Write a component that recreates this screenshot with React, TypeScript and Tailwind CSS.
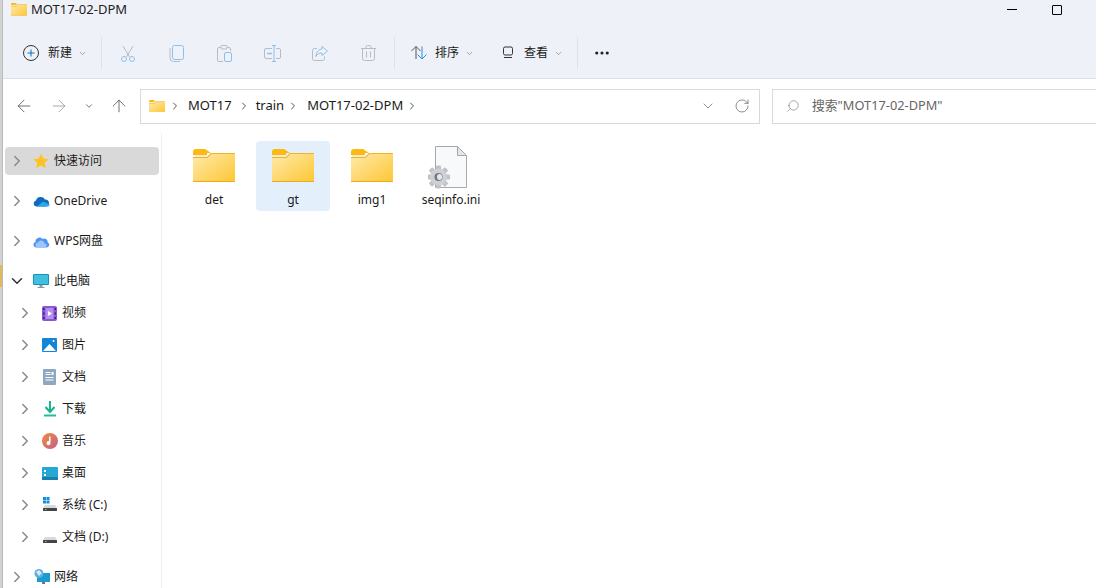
import React from "react";
import { ChevronRight, ChevronDown, ArrowLeft, ArrowRight, ArrowUp, RotateCw, Search, MoreHorizontal } from "lucide-react";

const font = { fontFamily: '"Noto Sans", "Noto Sans CJK SC", sans-serif' };

function Folder({ size = 18 }: { size?: number }) {
  const id = "f" + size;
  return (
    <svg width={size} height={(size * 33) / 42} viewBox="0 0 42 33" className="shrink-0">
      <defs>
        <linearGradient id={id} x1="0" y1="0" x2="1" y2="1">
          <stop offset="0" stopColor="#ffeaae" />
          <stop offset="1" stopColor="#fdc733" />
        </linearGradient>
      </defs>
      <path d="M0 3a3 3 0 0 1 3-3h9l6 4h-4v2H0z" fill="#fdb913" />
      <path d="M0 8h14l4-4h22a2 2 0 0 1 2 2v25a2 2 0 0 1-2 2H2a2 2 0 0 1-2-2z" fill={`url(#${id})`} />
      <path d="M14 8l4-4h24v1H18.500l-4 4H0V8z" fill="#f2b226" />
      <path d="M1 6h14l-2 2H1z" fill="#f6ecd0" />
      <rect y="32" width="42" height="1" fill="#efaa1b" />
    </svg>
  );
}

function ToolIcon({ children }: { children: React.ReactNode }) {
  return <div className="w-12 flex justify-center items-center">{children}</div>;
}

function NavRow({ label, indent, open, icon, active }: { label: string; indent?: boolean; open?: boolean; icon: React.ReactNode; active?: boolean }) {
  return (
    <div className={`h-[28px] flex items-center rounded-sm ${indent ? "pl-[11px]" : "pl-[3px]"} ${active ? "bg-[#d9d9d9]" : ""}`}>
      {open ? (
        <ChevronDown size={18} strokeWidth={2} className="text-[#333] shrink-0" />
      ) : (
        <ChevronRight size={18} strokeWidth={2} className="text-[#8a8a8a] shrink-0" />
      )}
      <div className="w-[17px] h-[17px] ml-[7px] flex items-center justify-center shrink-0">{icon}</div>
      <span className="ml-[4px] text-[12px] text-[#1a1a1a] whitespace-nowrap">{label}</span>
    </div>
  );
}

function Drive({ windows }: { windows?: boolean }) {
  return (
    <svg width="16" height="16" viewBox="0 0 16 16">
      {windows && (
        <g fill="#0f8fe0">
          <rect x="1" y="0" width="3" height="3" />
          <rect x="4.500" y="0" width="3" height="3" />
          <rect x="1" y="3.500" width="3" height="3" />
          <rect x="4.500" y="3.500" width="3" height="3" />
        </g>
      )}
      <path d="M3 8h10l2 3H1z" fill="#d9d9d9" />
      <rect x="1" y="11" width="14" height="3" rx="0.500" fill="#444" />
      <rect x="3" y="12" width="1.500" height="1" fill="#6fdc6f" />
    </svg>
  );
}

function FileItem({ label, selected, children }: { label: string; selected?: boolean; children: React.ReactNode }) {
  return (
    <div className={`w-[74px] h-[70px] mr-[5px] rounded-sm flex flex-col items-center pt-[8px] ${selected ? "bg-[#e3f0fb]" : ""}`}>
      <div className="h-[33px] flex items-center justify-center">{children}</div>
      <span className="mt-[10px] text-[12px] leading-[16px] text-[#1a1a1a]">{label}</span>
    </div>
  );
}

function Dropdown() {
  return <ChevronDown size={9} className="text-[#8a8a8a] ml-[6px]" />;
}

const gearTeeth = [0, 45, 90, 135, 180, 225, 270, 315];

export default function App() {
  return (
    <div className="w-[1096px] h-[588px] overflow-hidden flex bg-white" style={font}>
      <div className="w-[3px] bg-[#d2d2d2] border-r border-[#bcbcbc] shrink-0 flex flex-col">
        <div className="h-[265px]" />
        <div className="h-[22px] bg-[#e0b95c]" />
      </div>
      <div className="flex-1 min-w-0 flex flex-col">
        <div className="h-[79px] bg-[#eef2f8] border-b border-[#dcdfe3] flex flex-col">
          <div className="h-[19px] flex items-center pl-[8px]">
            <Folder size={16} />
            <span className="ml-[4px] text-[13px] text-[#222]">MOT17-02-DPM</span>
            <div className="ml-auto flex items-center mr-[34px]">
              <div className="w-[10px] h-px bg-black mr-[35px]" />
              <div className="w-[10px] h-[10px] border border-black rounded-[1px]" />
            </div>
          </div>
          <div className="h-[32px] mt-[18px] flex items-center pl-[20px]">
            <svg width="16" height="16" viewBox="0 0 16 16" fill="none" className="shrink-0">
              <circle cx="8" cy="8" r="7.500" stroke="#333" />
              <path d="M8 4.500v7M4.500 8h7" stroke="#0f6cbd" />
            </svg>
            <span className="ml-[9px] text-[12px] text-[#1a1a1a]">新建</span>
            <Dropdown />
            <div className="w-px h-[32px] bg-[#dfe3e8] ml-[14px] mr-[2px]" />
            <ToolIcon>
              <svg width="16" height="17" viewBox="0 0 16 17" fill="none">
                <path d="M3 1l6.500 11M13 1L6.500 12" stroke="#b4bcc4" />
                <circle cx="4" cy="14" r="2.500" stroke="#8cc0ec" />
                <circle cx="12" cy="14" r="2.500" stroke="#8cc0ec" />
              </svg>
            </ToolIcon>
            <ToolIcon>
              <svg width="15" height="17" viewBox="0 0 15 17" fill="none">
                <rect x="3.500" y="0.500" width="11" height="14" rx="2" stroke="#8cc0ec" />
                <path d="M1 3v10a3.500 3.500 0 0 0 3.500 3.500H11" stroke="#b4bcc4" />
              </svg>
            </ToolIcon>
            <ToolIcon>
              <svg width="15" height="17" viewBox="0 0 15 17" fill="none">
                <path d="M4 2.500H2a1.500 1.500 0 0 0-1.500 1.500v11A1.500 1.500 0 0 0 2 16.500h4M10 2.500h2a1.500 1.500 0 0 1 1.500 1.500v2" stroke="#b4bcc4" />
                <rect x="4" y="0.500" width="6" height="3.500" rx="1" stroke="#b4bcc4" />
                <rect x="7.500" y="7.500" width="7" height="9" rx="1.500" stroke="#8cc0ec" />
              </svg>
            </ToolIcon>
            <ToolIcon>
              <svg width="17" height="17" viewBox="0 0 17 17" fill="none">
                <path d="M8 3.500H2a1.500 1.500 0 0 0-1.500 1.500v7A1.500 1.500 0 0 0 2 13.500h6M12 3.500h3A1.500 1.500 0 0 1 16.500 5v7a1.500 1.500 0 0 1-1.500 1.500h-3" stroke="#b4bcc4" />
                <path d="M10 1v15M8 .5h4M8 16.500h4" stroke="#8cc0ec" />
                <path d="M3 8.500h5" stroke="#8cc0ec" strokeWidth="1.500" />
              </svg>
            </ToolIcon>
            <ToolIcon>
              <svg width="16" height="15" viewBox="0 0 16 15" fill="none">
                <path d="M5 2.500H2.500a2 2 0 0 0-2 2v8a2 2 0 0 0 2 2h8a2 2 0 0 0 2-2v-2" stroke="#b4bcc4" />
                <path d="M10 .5l5.500 4.500-5.500 4.500V7C7 7 5 8 4 10.500 4 6 6.500 3.300 10 3z" stroke="#8cc0ec" />
              </svg>
            </ToolIcon>
            <ToolIcon>
              <svg width="15" height="16" viewBox="0 0 15 16" fill="none" stroke="#b9bdc1">
                <path d="M0 3.500h15M5 3.500V2a1.500 1.500 0 0 1 1.500-1.500h2A1.500 1.500 0 0 1 10 2v1.500" />
                <path d="M1.500 3.500v10a2 2 0 0 0 2 2h8a2 2 0 0 0 2-2v-10" />
                <path d="M5.500 6.500v6M9.500 6.500v6" />
              </svg>
            </ToolIcon>
            <div className="w-px h-[32px] bg-[#dfe3e8] ml-[2px]" />
            <svg width="17" height="16" viewBox="0 0 17 16" fill="none" className="ml-[16px] shrink-0">
              <path d="M5 14V1.500M.5 6l4.500-4.500L9.500 6" stroke="#555" />
              <path d="M11 1.500V14M6.500 9.500L11 14l4.500-4.500" stroke="#2291e8" />
            </svg>
            <span className="ml-[7px] text-[12px] text-[#1a1a1a]">排序</span>
            <Dropdown />
            <svg width="12" height="14" viewBox="0 0 12 14" fill="none" stroke="#333" className="ml-[28px] shrink-0">
              <rect x="1.500" y="1" width="9" height="8" rx="1.500" />
              <path d="M2 11.500h8" />
            </svg>
            <span className="ml-[10px] text-[12px] text-[#1a1a1a]">查看</span>
            <Dropdown />
            <div className="w-px h-[32px] bg-[#dfe3e8] ml-[14px]" />
            <MoreHorizontal size={18} strokeWidth={2.200} className="ml-[15px] text-[#222]" />
          </div>
        </div>
        <div className="h-[54px] flex items-center shrink-0">
          <ArrowLeft size={20} strokeWidth={1} className="ml-[11px] text-[#555]" />
          <ArrowRight size={20} strokeWidth={1} className="ml-[15px] text-[#999]" />
          <ChevronDown size={10} strokeWidth={2} className="ml-[15px] text-[#555]" />
          <ArrowUp size={20} strokeWidth={1} className="ml-[15px] text-[#555]" />
          <div className="ml-[11px] w-[620px] h-[35px] border border-[#d9d9d9] flex items-center pl-[8px] text-[13px] text-[#1a1a1a]">
            <Folder size={16} />
            <ChevronRight size={12} strokeWidth={2} className="ml-[4px] text-[#555]" />
            <span className="ml-[7px]">MOT17</span>
            <ChevronRight size={12} strokeWidth={2} className="ml-[6px] text-[#555]" />
            <span className="ml-[6px]">train</span>
            <ChevronRight size={12} strokeWidth={2} className="ml-[3px] text-[#555]" />
            <span className="ml-[8px]">MOT17-02-DPM</span>
            <ChevronRight size={12} strokeWidth={2} className="ml-[3px] text-[#555]" />
            <ChevronDown size={16} strokeWidth={1} className="ml-auto text-[#555]" />
            <RotateCw size={16} strokeWidth={1} className="ml-[18px] mr-[9px] text-[#555]" />
          </div>
          <div className="ml-[12px] flex-1 h-[35px] border border-[#d9d9d9] border-r-0 flex items-center pl-[13px]">
            <Search size={14} strokeWidth={1.100} className="text-[#777] -scale-x-100" />
            <span className="ml-[12px] text-[12.800px] text-[#666] whitespace-nowrap">搜索"MOT17-02-DPM"</span>
          </div>
        </div>
        <div className="flex-1 flex min-h-0">
          <div className="w-[159px] border-r border-[#f0f0f0] shrink-0 pl-[2px] pr-[2px] pt-[14px] flex flex-col">
            <div className="flex flex-col gap-[12px]">
              <NavRow active label="快速访问" icon={<svg width="16" height="16" viewBox="0 0 24 24" className="-ml-[1px]"><path d="M12 1l3.400 7.400 8 .9-6 5.400 1.700 7.900L12 18.600l-7.100 4 1.700-7.900-6-5.400 8-.9z" fill="#ffc31f" /></svg>} />
              <NavRow label="OneDrive" icon={<svg width="17" height="12" viewBox="0 0 17 12"><path d="M3.500 11.500a3 3 0 0 1-.6-5.900A5 5 0 0 1 12 4.500a3.600 3.600 0 0 1 1.500 7z" fill="#0f6cbd" /><path d="M4 11.500l6-5 6.800 3a2.600 2.600 0 0 1-2.800 2z" fill="#28a8ea" /></svg>} />
              <NavRow label="WPS网盘" icon={<svg width="17" height="13" viewBox="0 0 17 13"><path d="M3 12.500a2.800 2.800 0 0 1-.5-5.500A4 4 0 0 1 9.500 4a3.500 3.500 0 0 1 5.200 3.200A2.800 2.800 0 0 1 14 12.500z" fill="#4d94f5" /><path d="M5 12.500a2.500 2.500 0 0 1 0-5 3.400 3.400 0 0 1 6.500 1 2 2 0 0 1 .5 4z" fill="#9cc6fb" /></svg>} />
              <NavRow open label="此电脑" icon={<svg width="17" height="16" viewBox="0 0 17 16"><rect y="1" width="16" height="11" rx="1" fill="#1b8fbd" /><rect x="1" y="2" width="14" height="9" fill="#3fc0dc" /><rect x="6.500" y="12" width="3" height="2" fill="#8a9aa6" /><rect x="4.500" y="14" width="7" height="1" fill="#8a9aa6" /></svg>} />
            </div>
            <div className="flex flex-col gap-[4px] mt-[4px]">
              <NavRow indent label="视频" icon={<svg width="15" height="15" viewBox="0 0 15 15"><rect width="15" height="15" rx="2" fill="#8a55d8" /><rect x="3.500" y="2" width="8" height="11" fill="#b490ea" /><path d="M6 5l4 2.500L6 10z" fill="#fff" /><g fill="#3c1f78"><rect x="1" y="2" width="1.500" height="2" /><rect x="1" y="6.500" width="1.500" height="2" /><rect x="1" y="11" width="1.500" height="2" /><rect x="12.500" y="2" width="1.500" height="2" /><rect x="12.500" y="6.500" width="1.500" height="2" /><rect x="12.500" y="11" width="1.500" height="2" /></g></svg>} />
              <NavRow indent label="图片" icon={<svg width="15" height="14" viewBox="0 0 15 14"><rect width="15" height="14" rx="1" fill="#1486d8" /><path d="M1 13l6.500-7L14 13z" fill="#fff" /><circle cx="11.500" cy="3" r="1" fill="#fff" /></svg>} />
              <NavRow indent label="文档" icon={<svg width="13" height="16" viewBox="0 0 13 16"><rect width="13" height="16" rx="1" fill="#8fa8c2" /><g fill="#fff"><rect x="2.500" y="3" width="5" height="1" /><rect x="2.500" y="5" width="5" height="1" /><rect x="8.500" y="3" width="2" height="3" /><rect x="2.500" y="8" width="8" height="1" /><rect x="2.500" y="10.500" width="8" height="1" /></g></svg>} />
              <NavRow indent label="下载" icon={<svg width="14" height="16" viewBox="0 0 14 16" fill="none"><path d="M7 0v10" stroke="#1bb28e" strokeWidth="2" /><path d="M2.500 6L7 11l4.500-5" stroke="#1bb28e" strokeWidth="2" /><rect x="1" y="13.500" width="12" height="2" fill="#21bd9e" /></svg>} />
              <NavRow indent label="音乐" icon={<svg width="16" height="16" viewBox="0 0 16 16"><defs><linearGradient id="mu" x1="0" y1="0" x2="1" y2="1"><stop offset="0" stopColor="#f08a3c" /><stop offset="1" stopColor="#c2608f" /></linearGradient></defs><circle cx="8" cy="8" r="8" fill="url(#mu)" /><path d="M8.500 3.500v6.500a2 2 0 1 1-1.500-1.800V3.500z" fill="#fff" /></svg>} />
              <NavRow indent label="桌面" icon={<svg width="16" height="13" viewBox="0 0 16 13"><rect width="16" height="13" rx="1" fill="#25a7d8" /><rect x="2" y="3" width="2" height="2" fill="#fff" /><rect x="2" y="7" width="2" height="2" fill="#fff" /><rect y="10" width="16" height="3" fill="#1b7fa8" /></svg>} />
              <NavRow indent label="系统 (C:)" icon={<Drive windows />} />
              <NavRow indent label="文档 (D:)" icon={<Drive />} />
            </div>
            <div className="mt-[12px]">
              <NavRow label="网络" icon={<svg width="16" height="16" viewBox="0 0 16 16"><rect x="3" y="4" width="13" height="9" fill="#1a9ccf" /><rect x="8" y="13" width="3" height="2" fill="#777" /><circle cx="5" cy="4.500" r="4.500" fill="#5aaee0" /><path d="M2 3l3-2 3 3-3 3z" fill="#d4eafa" /></svg>} />
            </div>
          </div>
          <div className="flex-1 pl-[15px] pt-[8px] flex items-start">
            <FileItem label="det"><Folder size={42} /></FileItem>
            <FileItem selected label="gt"><Folder size={42} /></FileItem>
            <FileItem label="img1"><Folder size={42} /></FileItem>
            <FileItem label="seqinfo.ini">
              <svg width="46" height="49" viewBox="0 0 46 49" className="shrink-0">
                <path d="M7.500 5.500h22l9 9v32h-31z" fill="#f8f9fa" stroke="#a8a8a8" />
                <path d="M29.500 5.500v9h9z" fill="#e6e6e6" stroke="#a8a8a8" />
                <g fill="#bfc3c7">
                  {gearTeeth.map((a) => (
                    <rect key={a} x="8" y="24.500" width="5" height="5" rx="1" transform={`rotate(${a} 10.500 36)`} />
                  ))}
                </g>
                <circle cx="10.500" cy="36" r="8.500" fill="#cdd0d4" />
                <circle cx="10.500" cy="36" r="4" fill="#74787c" />
                <ellipse cx="11.500" cy="36" rx="2.500" ry="3" fill="#e8e9ea" />
              </svg>
            </FileItem>
          </div>
        </div>
      </div>
    </div>
  );
}
